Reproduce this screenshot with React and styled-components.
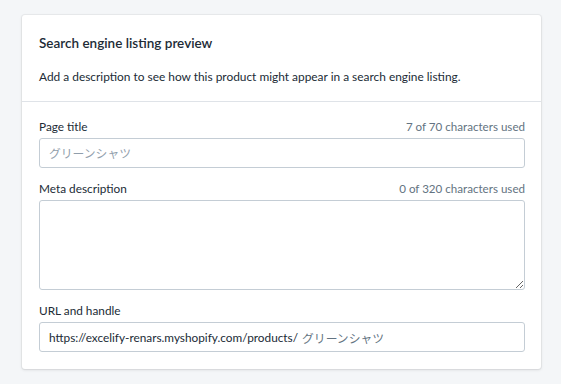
import React from "react";
import styled, { createGlobalStyle } from "styled-components";

const Global = createGlobalStyle`
  html, body {
    margin: 0;
    background: #f4f6f8;
    font-family: Lato, "Noto Sans CJK JP", sans-serif;
    color: #212b36;
  }
`;

const Page = styled.div`
  padding: 15px 20px 15px 22px;
`;

const Card = styled.div`
  width: 519px;
  background: #fff;
  border-radius: 3px;
  box-shadow: 0 0 0 1px rgba(63, 63, 68, 0.05), 0 1px 3px 0 rgba(63, 63, 68, 0.15);
`;

const Section = styled.div`
  padding: ${(p) => p.$pad};
  border-top: ${(p) => (p.$divided ? "1px solid #dfe3e8" : "none")};
  display: flex;
  flex-direction: column;
  gap: ${(p) => p.$gap || "0"};
`;

const Heading = styled.h2`
  margin: 0;
  font-size: 13.5px;
  font-weight: 600;
  line-height: 20px;
`;

const Text = styled.p`
  margin: 14px 0 0;
  font-size: 11.9px;
  line-height: 20px;
`;

const Field = styled.div`
  display: flex;
  flex-direction: column;
`;

const LabelRow = styled.div`
  display: flex;
  justify-content: space-between;
  align-items: baseline;
  font-size: 11.8px;
  line-height: 20px;
  margin-bottom: 1px;
`;

const Label = styled.label``;

const Counter = styled.span`
  color: #637381;
  font-size: 11.6px;
`;

const Input = styled.input`
  box-sizing: border-box;
  width: 100%;
  height: 30px;
  border: 1px solid #c4cdd5;
  border-radius: 3px;
  padding: 0 9px;
  font-family: inherit;
  font-size: 11.8px;
  color: #212b36;
  outline: none;
  &::placeholder {
    color: #919eab;
  }
`;

const Area = styled.textarea`
  box-sizing: border-box;
  width: 100%;
  height: 90px;
  border: 1px solid #c4cdd5;
  border-radius: 3px;
  padding: 6px 9px;
  font-family: inherit;
  font-size: 11.8px;
  display: block;
  outline: none;
`;

const UrlBox = styled.div`
  box-sizing: border-box;
  height: 30px;
  border: 1px solid #c4cdd5;
  border-radius: 3px;
  padding: 0 9px;
  display: flex;
  align-items: center;
  font-size: 11.8px;
  white-space: nowrap;
`;

const Prefix = styled.span`
  color: #212b36;
`;

const Handle = styled.span`
  color: #637381;
  margin-left: 4px;
`;

export default function App() {
  return (
    <>
      <Global />
      <Page>
        <Card>
          <Section $pad="18px 17px 14px">
            <Heading>Search engine listing preview</Heading>
            <Text>Add a description to see how this product might appear in a search engine listing.</Text>
          </Section>
          <Section $divided $pad="15px 16px 17px 17px" $gap="11px">
            <Field>
              <LabelRow>
                <Label>Page title</Label>
                <Counter>7 of 70 characters used</Counter>
              </LabelRow>
              <Input placeholder="グリーンシャツ" />
            </Field>
            <Field>
              <LabelRow>
                <Label>Meta description</Label>
                <Counter>0 of 320 characters used</Counter>
              </LabelRow>
              <Area />
            </Field>
            <Field>
              <LabelRow>
                <Label>URL and handle</Label>
              </LabelRow>
              <UrlBox>
                <Prefix>https://excelify-renars.myshopify.com/products/</Prefix>
                <Handle>グリーンシャツ</Handle>
              </UrlBox>
            </Field>
          </Section>
        </Card>
      </Page>
    </>
  );
}
